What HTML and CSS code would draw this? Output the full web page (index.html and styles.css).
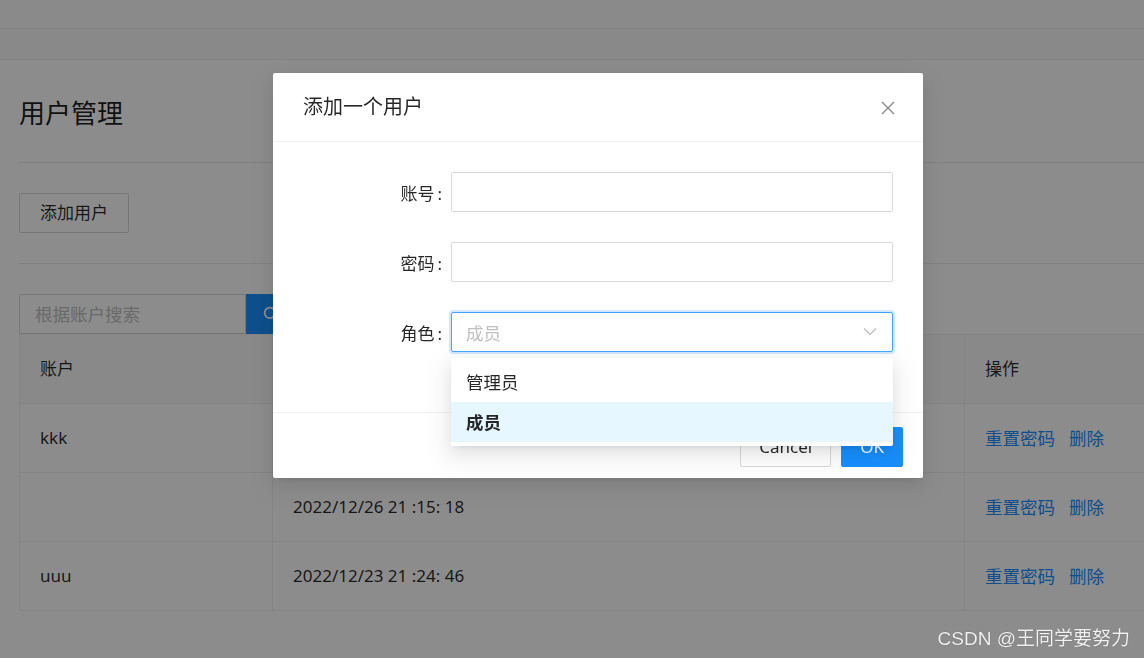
FILE: index.html
```html
<!DOCTYPE html>
<html lang="zh-CN">
<head>
<meta charset="utf-8">
<title>用户管理</title>
<link rel="stylesheet" href="styles.css">
</head>
<body>
<div class="page">
  <div class="topbar"></div>
  <div class="subbar"></div>
  <div class="content">
    <h1 class="title">用户管理</h1>
    <div class="toolbar">
      <button class="btn">添加用户</button>
    </div>
    <div class="search">
      <input class="search-input" placeholder="根据账户搜索">
      <button class="search-btn">
        <svg width="18" height="18" viewBox="0 0 24 24" fill="none" stroke="#fff" stroke-width="2.4"><circle cx="10.5" cy="10.5" r="7"/><path d="M15.5 15.5l5.5 5.5"/></svg>
      </button>
    </div>
    <table class="table">
      <colgroup><col class="c1"><col class="c2"><col class="c3"></colgroup>
      <thead>
        <tr><th>账户</th><th>创建时间</th><th>操作</th></tr>
      </thead>
      <tbody>
        <tr><td>kkk</td><td>2022/12/27 10 :32: 09</td><td><a class="link">重置密码</a><a class="link">删除</a></td></tr>
        <tr><td></td><td>2022/12/26 21 :15: 18</td><td><a class="link">重置密码</a><a class="link">删除</a></td></tr>
        <tr><td>uuu</td><td>2022/12/23 21 :24: 46</td><td><a class="link">重置密码</a><a class="link">删除</a></td></tr>
      </tbody>
    </table>
  </div>
</div>

<div class="mask">
  <div class="modal">
    <div class="modal-header">
      <span class="modal-title">添加一个用户</span>
      <svg class="close" width="16" height="16" viewBox="0 0 16 16" stroke="#8c8c8c" stroke-width="1.4" fill="none"><path d="M2 2L14 14M14 2L2 14"/></svg>
    </div>
    <div class="modal-body">
      <div class="form-row">
        <label class="label">账号<span class="colon">:</span></label>
        <input class="input">
      </div>
      <div class="form-row">
        <label class="label">密码<span class="colon">:</span></label>
        <input class="input">
      </div>
      <div class="form-row">
        <label class="label">角色<span class="colon">:</span></label>
        <div class="select">
          <span class="placeholder">成员</span>
          <svg class="arrow" width="14" height="9" viewBox="0 0 14 9" fill="none" stroke="#bfbfbf" stroke-width="1.3"><path d="M1 1.5l6 6 6-6"/></svg>
          <div class="dropdown">
            <div class="option">管理员</div>
            <div class="option active">成员</div>
          </div>
        </div>
      </div>
    </div>
    <div class="modal-footer">
      <button class="btn">Cancel</button>
      <button class="btn primary">OK</button>
    </div>
  </div>
  <div class="watermark">CSDN @王同学要努力</div>
</div>
</body>
</html>
```

FILE: styles.css
```css
* { box-sizing: border-box; }
html, body {
  margin: 0;
  padding: 0;
  background: #fff;
  overflow: hidden;
}
body {
  font-family: "Noto Sans", "Noto Sans CJK SC", sans-serif;
  font-size: 17px;
  color: rgba(0, 0, 0, 0.85);
  width: 1144px;
  height: 658px;
}
.page { width: 1144px; }
.topbar {
  height: 29px;
  background: #fcfcfc;
  border-bottom: 1px solid #ebebeb;
}
.subbar {
  height: 31px;
  background: #f9f9f9;
  border-bottom: 1px solid #ededed;
}
.content {
  padding-left: 19px;
}
.title {
  margin: 0;
  padding: 37px 0 33px;
  font-size: 26px;
  font-weight: 400;
  line-height: 32px;
  border-bottom: 1px solid #eaeaea;
  color: rgba(0, 0, 0, 0.9);
}
.toolbar {
  padding: 30px 0;
  border-bottom: 1px solid #eaeaea;
  display: flex;
}
.btn {
  height: 40px;
  padding: 0 20px;
  font-family: inherit;
  font-size: 17px;
  color: rgba(0, 0, 0, 0.85);
  background: #fff;
  border: 1px solid #d9d9d9;
  border-radius: 2px;
  line-height: 38px;
}
.search {
  display: flex;
  margin-top: 30px;
  height: 40px;
}
.search-input {
  width: 227px;
  height: 40px;
  border: 1px solid #d9d9d9;
  border-radius: 2px 0 0 2px;
  padding: 0 15px;
  font-family: inherit;
  font-size: 17.5px;
  outline: none;
}
.search-input::placeholder { color: #bfbfbf; }
.search-btn {
  width: 50px;
  height: 40px;
  background: #1890ff;
  border: 0;
  border-radius: 0 2px 2px 0;
  display: flex;
  align-items: center;
  justify-content: center;
  padding: 0;
}
.table {
  border-collapse: collapse;
  width: 1140px;
  table-layout: fixed;
}
.c1 { width: 253px; }
.c2 { width: 692px; }
.table th, .table td {
  height: 69px;
  padding: 0 20px;
  text-align: left;
  font-weight: 400;
  border: 1px solid #f0f0f0;
  line-height: 24px;
}
.table th { background: #fafafa; }
.link {
  color: #1890ff;
  margin-right: 14px;
  cursor: pointer;
  font-size: 17.5px;
}

.mask {
  position: fixed;
  inset: 0;
  background: rgba(0, 0, 0, 0.45);
}
.modal {
  margin: 73px 0 0 273px;
  width: 650px;
  background: #fff;
  border-radius: 2px;
  box-shadow: 0 3px 6px -4px rgba(0,0,0,.12), 0 6px 16px 0 rgba(0,0,0,.08), 0 9px 28px 8px rgba(0,0,0,.05);
}
.modal-header {
  height: 69px;
  padding: 0 27px 0 30px;
  display: flex;
  align-items: center;
  justify-content: space-between;
  border-bottom: 1px solid #f0f0f0;
}
.modal-title {
  font-size: 20px;
  color: rgba(0, 0, 0, 0.85);
  line-height: 28px;
}
.close { margin-top: 2px; }
.modal-body {
  padding: 30px 30px 60px 30px;
  display: flex;
  flex-direction: column;
  gap: 30px;
}
.form-row {
  display: flex;
  align-items: center;
  height: 40px;
}
.label {
  width: 148px;
  text-align: right;
  color: rgba(0, 0, 0, 0.85);
}
.colon {
  margin: 0 9px 0 3px;
}
.input {
  flex: 1;
  height: 40px;
  border: 1px solid #d9d9d9;
  border-radius: 2px;
  outline: none;
}
.select {
  flex: 1;
  height: 40px;
  border: 1px solid #40a9ff;
  border-radius: 2px;
  box-shadow: 0 0 0 2px rgba(24, 144, 255, 0.2);
  display: flex;
  align-items: center;
  justify-content: space-between;
  padding: 0 15px 0 14px;
  position: relative;
}
.placeholder { color: #bfbfbf; font-size: 17.5px; }
.arrow { margin-top: -2px; }
.dropdown {
  position: absolute;
  left: -1px;
  right: -1px;
  top: 45px;
  background: #fff;
  border-radius: 2px;
  padding: 4px 0;
  z-index: 5;
  box-shadow: 0 3px 6px -4px rgba(0,0,0,.12), 0 6px 16px 0 rgba(0,0,0,.08), 0 9px 28px 8px rgba(0,0,0,.05);
}
.option {
  height: 40px;
  line-height: 40px;
  padding: 0 15px;
  font-size: 17.5px;
  color: rgba(0, 0, 0, 0.85);
}
.option.active {
  background: #e6f7ff;
  font-weight: 700;
}
.modal-footer {
  border-top: 1px solid #f0f0f0;
  padding: 14px 20px 11px;
  display: flex;
  justify-content: flex-end;
  gap: 10px;
}
.modal-footer .btn { padding: 0 18px; }
.btn.primary {
  background: #1890ff;
  border-color: #1890ff;
  color: #fff;
}
.watermark {
  position: absolute;
  right: 14px;
  bottom: 8px;
  font-size: 19px;
  color: #f2f2f2;
  text-shadow: 0 0 1px rgba(0,0,0,.5);
  font-family: "Liberation Sans", "Noto Sans CJK SC", sans-serif;
}
```
